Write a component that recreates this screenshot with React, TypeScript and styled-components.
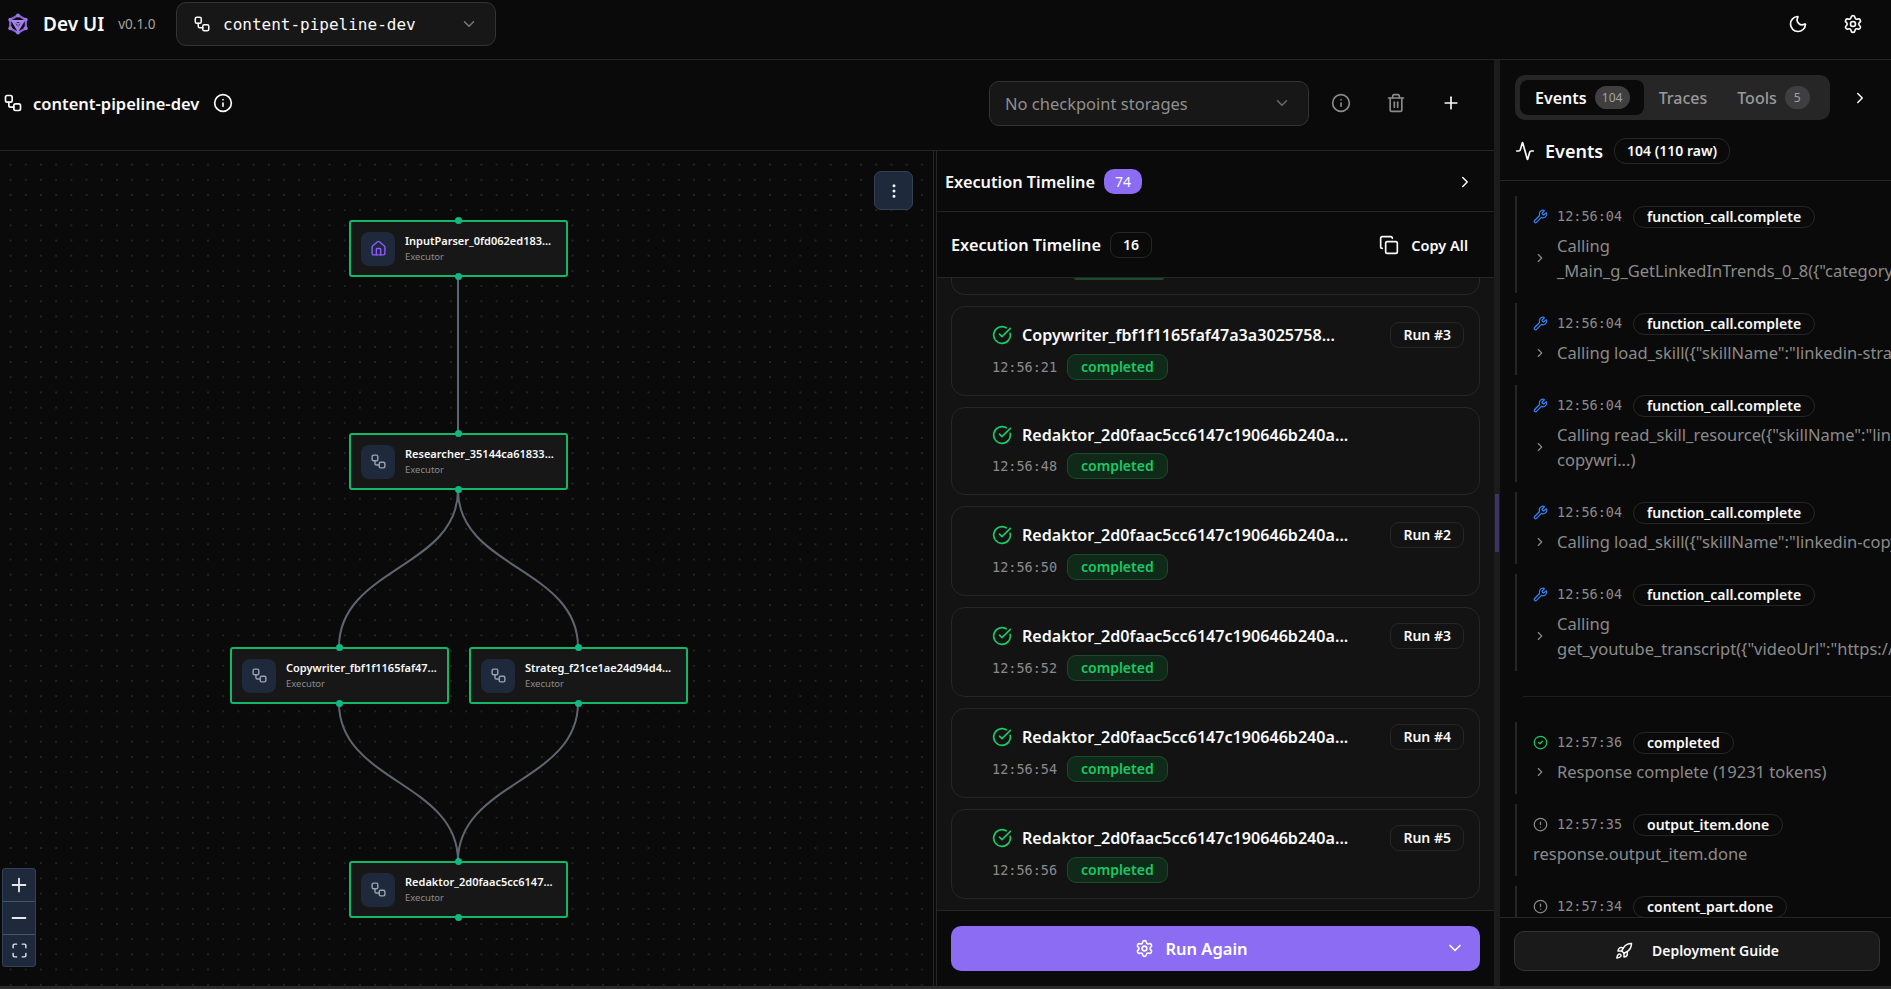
import { FC, ReactNode } from "react";
import styled, { createGlobalStyle } from "styled-components";
import {
  Activity,
  ChevronDown,
  ChevronRight,
  CircleAlert,
  CircleCheck,
  CircleCheckBig,
  Copy,
  EllipsisVertical,
  House,
  Info,
  Maximize,
  Minus,
  Moon,
  Plus,
  Rocket,
  Settings,
  Trash2,
  Workflow,
  Wrench,
} from "lucide-react";

const SANS = `"Noto Sans", "Open Sans", sans-serif`;
const MONO = `"DejaVu Sans Mono", "Liberation Mono", monospace`;

const GlobalStyle = createGlobalStyle`
  html, body {
    margin: 0;
    height: 100%;
    background: #0a0a0a;
    color: #fafafa;
    font-family: ${SANS};
    overflow: hidden;
  }
  * { box-sizing: border-box; }
`;

type FlowNode = { id: string; label: string; x: number; y: number; home?: boolean };

const NODES: FlowNode[] = [
  { id: "a", label: "InputParser_0fd062ed183...", x: 349, y: 69, home: true },
  { id: "b", label: "Researcher_35144ca61833...", x: 349, y: 282 },
  { id: "c", label: "Copywriter_fbf1f1165faf47...", x: 230, y: 496 },
  { id: "d", label: "Strateg_f21ce1ae24d94d4...", x: 469, y: 496 },
  { id: "e", label: "Redaktor_2d0faac5cc6147...", x: 349, y: 710 },
];

const EDGES = [
  "M458 126 L458 282",
  "M458 339 C458 417 339 417 339 496",
  "M458 339 C458 417 578 417 578 496",
  "M339 552 C339 631 458 631 458 710",
  "M578 552 C578 631 458 631 458 710",
];

const RUNS = [
  { title: "Copywriter_fbf1f1165faf47a3a3025758...", time: "12:56:21", run: "Run #3" },
  { title: "Redaktor_2d0faac5cc6147c190646b240a...", time: "12:56:48" },
  { title: "Redaktor_2d0faac5cc6147c190646b240a...", time: "12:56:50", run: "Run #2" },
  { title: "Redaktor_2d0faac5cc6147c190646b240a...", time: "12:56:52", run: "Run #3" },
  { title: "Redaktor_2d0faac5cc6147c190646b240a...", time: "12:56:54", run: "Run #4" },
  { title: "Redaktor_2d0faac5cc6147c190646b240a...", time: "12:56:56", run: "Run #5" },
];

type EventItem = {
  kind: "tool" | "ok" | "info";
  time: string;
  name: string;
  lines: string[];
  chevron?: boolean;
};

const TOOL_EVENTS: EventItem[] = [
  { kind: "tool", time: "12:56:04", name: "function_call.complete", chevron: true, lines: ["Calling", '_Main_g_GetLinkedInTrends_0_8({"category":"tech"})'] },
  { kind: "tool", time: "12:56:04", name: "function_call.complete", chevron: true, lines: ['Calling load_skill({"skillName":"linkedin-strategy"})'] },
  { kind: "tool", time: "12:56:04", name: "function_call.complete", chevron: true, lines: ['Calling read_skill_resource({"skillName":"linkedin-', "copywri...)"] },
  { kind: "tool", time: "12:56:04", name: "function_call.complete", chevron: true, lines: ['Calling load_skill({"skillName":"linkedin-copywriting"})'] },
  { kind: "tool", time: "12:56:04", name: "function_call.complete", chevron: true, lines: ["Calling", 'get_youtube_transcript({"videoUrl":"https://www.youtube'] },
];

const LATE_EVENTS: EventItem[] = [
  { kind: "ok", time: "12:57:36", name: "completed", chevron: true, lines: ["Response complete (19231 tokens)"] },
  { kind: "info", time: "12:57:35", name: "output_item.done", lines: ["response.output_item.done"] },
  { kind: "info", time: "12:57:34", name: "content_part.done", lines: ["response.content_part.done"] },
];

const Logo: FC = () => (
  <svg width="22" height="22" viewBox="0 0 24 24" fill="none">
    <path d="M12 2.5 20.5 7.3V16.7L12 21.5 3.5 16.7V7.3Z" stroke="#8a63d2" strokeWidth="2.4" />
    <path d="M4 7.5 12 21 20 7.5Z" fill="#a684ea" />
    <path d="M8.3 9.7H15.7L12 16.2Z" fill="#3a2a63" />
    <path d="M12 12.2V21M8.3 9.7 12 12.2 15.7 9.7" stroke="#a684ea" strokeWidth="1.4" />
    <circle cx="12" cy="2.7" r="2.2" fill="#9a78e2" />
    <circle cx="12" cy="21.3" r="2.2" fill="#9a78e2" />
    <circle cx="3.6" cy="7.4" r="2.2" fill="#9a78e2" />
    <circle cx="20.4" cy="7.4" r="2.2" fill="#9a78e2" />
    <circle cx="3.6" cy="16.6" r="2.2" fill="#9a78e2" />
    <circle cx="20.4" cy="16.6" r="2.2" fill="#9a78e2" />
  </svg>
);

const EventRow: FC<{ item: EventItem }> = ({ item }) => {
  let icon: ReactNode = <CircleAlert size={15} color="#8b8b8b" />;
  if (item.kind === "tool") icon = <Wrench size={15} color="#3b82f6" />;
  if (item.kind === "ok") icon = <CircleCheck size={15} color="#18c964" />;
  return (
    <EventBox>
      <EventHead>
        <EventIcon>{icon}</EventIcon>
        <EventTime>{item.time}</EventTime>
        <EventTag>{item.name}</EventTag>
      </EventHead>
      <EventBody>
        {item.chevron && (
          <EventChevron>
            <ChevronRight size={14} color="#8a8a8a" />
          </EventChevron>
        )}
        <div>
          {item.lines.map((line) => (
            <EventLine key={line}>{line}</EventLine>
          ))}
        </div>
      </EventBody>
    </EventBox>
  );
};

export default function App() {
  return (
    <Page>
      <GlobalStyle />
      <TopBar>
        <Brand>
          <Logo />
          <BrandName>Dev UI</BrandName>
          <Version>v0.1.0</Version>
        </Brand>
        <WorkflowSelect>
          <Workflow size={18} color="#fafafa" />
          <WorkflowName>content-pipeline-dev</WorkflowName>
          <ChevronDown size={18} color="#7a7a7a" />
        </WorkflowSelect>
        <TopActions>
          <Moon size={20} />
          <Settings size={20} />
        </TopActions>
      </TopBar>

      <Content>
        <Main>
          <TitleBar>
            <Workflow size={20} color="#fafafa" />
            <PageTitle>content-pipeline-dev</PageTitle>
            <Info size={20} color="#fafafa" />
            <TitleActions>
              <CheckpointSelect>
                <span>No checkpoint storages</span>
                <ChevronDown size={18} color="#6b6b6b" />
              </CheckpointSelect>
              <IconSlot>
                <Info size={20} color="#8a8a8a" />
              </IconSlot>
              <IconSlot>
                <Trash2 size={20} color="#8a8a8a" />
              </IconSlot>
              <IconSlot>
                <Plus size={20} color="#fafafa" />
              </IconSlot>
            </TitleActions>
          </TitleBar>

          <Split>
            <Canvas>
              <EdgeLayer width="934" height="835">
                {EDGES.map((d) => (
                  <path key={d} d={d} fill="none" stroke="#5f6570" strokeWidth="2" />
                ))}
              </EdgeLayer>
              {NODES.map((node) => (
                <NodeCard key={node.id} $x={node.x} $y={node.y}>
                  <TopHandle />
                  <NodeIcon>
                    {node.home ? <House size={17} color="#8b5cf6" /> : <Workflow size={17} color="#9ca3af" />}
                  </NodeIcon>
                  <NodeText>
                    <NodeLabel>{node.label}</NodeLabel>
                    <NodeKind>Executor</NodeKind>
                  </NodeText>
                  <BottomHandle />
                </NodeCard>
              ))}
              <MenuButton>
                <EllipsisVertical size={18} color="#f5f5f5" />
              </MenuButton>
              <ZoomControls>
                <ZoomButton>
                  <Plus size={22} />
                </ZoomButton>
                <ZoomButton>
                  <Minus size={22} />
                </ZoomButton>
                <ZoomButton>
                  <Maximize size={17} />
                </ZoomButton>
              </ZoomControls>
            </Canvas>

            <Timeline>
              <TimelineBar>
                <BarTitle>Execution Timeline</BarTitle>
                <PurpleCount>74</PurpleCount>
                <BarEnd>
                  <ChevronRight size={18} />
                </BarEnd>
              </TimelineBar>
              <TimelineHead>
                <BarTitle>Execution Timeline</BarTitle>
                <OutlineCount>16</OutlineCount>
                <CopyAll>
                  <Copy size={20} />
                  Copy All
                </CopyAll>
              </TimelineHead>
              <RunList>
                <RunStack>
                  <ClippedCard>
                    <StatusStub />
                  </ClippedCard>
                  {RUNS.map((item) => (
                    <RunCard key={item.time}>
                      <RunTop>
                        <CircleCheckBig size={20} color="#18c964" />
                        <RunTitle>{item.title}</RunTitle>
                        {item.run && <RunBadge>{item.run}</RunBadge>}
                      </RunTop>
                      <RunMeta>
                        <RunTime>{item.time}</RunTime>
                        <StatusBadge>completed</StatusBadge>
                      </RunMeta>
                    </RunCard>
                  ))}
                </RunStack>
              </RunList>
              <RunFooter>
                <RunButton>
                  <Settings size={19} />
                  Run Again
                  <RunCaret>
                    <ChevronDown size={20} />
                  </RunCaret>
                </RunButton>
              </RunFooter>
            </Timeline>
          </Split>
        </Main>

        <Handle>
          <HandleMark />
        </Handle>

        <Side>
          <TabsRow>
            <Tabs>
              <ActiveTab>
                Events <TabCount>104</TabCount>
              </ActiveTab>
              <Tab>Traces</Tab>
              <ToolsTab>
                Tools <TabCount $round>5</TabCount>
              </ToolsTab>
            </Tabs>
            <ChevronRight size={18} color="#fafafa" />
          </TabsRow>
          <EventsHead>
            <Activity size={20} />
            <EventsTitle>Events</EventsTitle>
            <EventsCount>104 (110 raw)</EventsCount>
          </EventsHead>
          <EventList>
            {TOOL_EVENTS.map((item, i) => (
              <EventRow key={i} item={item} />
            ))}
            <EventGap />
            {LATE_EVENTS.map((item) => (
              <EventRow key={item.time} item={item} />
            ))}
          </EventList>
          <SideFooter>
            <GuideButton>
              <Rocket size={18} />
              Deployment Guide
            </GuideButton>
          </SideFooter>
        </Side>
      </Content>
      <BottomEdge />
    </Page>
  );
}

const Page = styled.div`
  display: flex;
  flex-direction: column;
  height: 100vh;
  overflow: hidden;
`;

const TopBar = styled.header`
  display: flex;
  align-items: center;
  height: 60px;
  flex: none;
  padding: 0 28px 11px 7px;
  border-bottom: 1px solid #262626;
`;

const Brand = styled.div`
  display: flex;
  align-items: center;
  width: 169px;
`;

const BrandName = styled.span`
  margin-left: 14px;
  font-size: 19px;
  font-weight: 600;
`;

const Version = styled.span`
  margin-left: 14px;
  font-size: 13.5px;
  color: #a3a3a3;
`;

const WorkflowSelect = styled.div`
  display: flex;
  align-items: center;
  width: 320px;
  height: 44px;
  padding: 0 17px 0 16px;
  background: #171717;
  border: 1px solid #333;
  border-radius: 10px;
`;

const WorkflowName = styled.span`
  flex: 1;
  margin-left: 12px;
  font-family: ${MONO};
  font-size: 16px;
`;

const TopActions = styled.div`
  display: flex;
  align-items: center;
  gap: 35px;
  margin-left: auto;
  color: #fafafa;
`;

const Content = styled.div`
  display: flex;
  flex: 1;
  min-height: 0;
`;

const Main = styled.main`
  display: flex;
  flex-direction: column;
  width: 1494px;
  flex: none;
`;

const TitleBar = styled.div`
  display: flex;
  align-items: center;
  height: 91px;
  flex: none;
  padding: 0 0 4px 3px;
  border-bottom: 1px solid #262626;
`;

const PageTitle = styled.h1`
  margin: 0 14px 0 10px;
  font-size: 16.5px;
  font-weight: 600;
`;

const TitleActions = styled.div`
  display: flex;
  align-items: center;
  margin-left: auto;
  padding-right: 16px;
`;

const CheckpointSelect = styled.div`
  display: flex;
  align-items: center;
  justify-content: space-between;
  width: 320px;
  height: 45px;
  margin-right: 4px;
  padding: 0 17px 0 15px;
  background: #171717;
  border: 1px solid #333;
  border-radius: 10px;
  font-size: 16.5px;
  color: #8f8f8f;
`;

const IconSlot = styled.div`
  display: flex;
  align-items: center;
  justify-content: center;
  width: 55px;
  height: 40px;
`;

const Split = styled.div`
  display: flex;
  flex: 1;
  min-height: 0;
`;

const Canvas = styled.section`
  position: relative;
  width: 934px;
  flex: none;
  overflow: hidden;
  border-right: 1px solid #262626;
  background-color: #0a0a0a;
  background-image: radial-gradient(circle, #2a2a2a 0.6px, transparent 1px);
  background-size: 15.2px 15.2px;
  background-position: 3px 6px;
`;

const EdgeLayer = styled.svg`
  position: absolute;
  left: 0;
  top: 0;
`;

const NodeCard = styled.div<{ $x: number; $y: number }>`
  position: absolute;
  left: ${(p) => p.$x}px;
  top: ${(p) => p.$y}px;
  display: flex;
  align-items: center;
  gap: 10px;
  width: 219px;
  height: 57px;
  padding: 0 10px;
  background: #171717;
  border: 2px solid #12b76a;
  border-radius: 3px;
`;

const TopHandle = styled.i`
  position: absolute;
  left: 50%;
  top: -5px;
  width: 7px;
  height: 7px;
  margin-left: -3.5px;
  border-radius: 50%;
  background: #10b981;
`;

const BottomHandle = styled(TopHandle)`
  top: auto;
  bottom: -5px;
`;

const NodeIcon = styled.div`
  display: flex;
  align-items: center;
  justify-content: center;
  width: 34px;
  height: 34px;
  flex: none;
  background: #1e293b;
  border-radius: 8px;
`;

const NodeText = styled.div`
  display: flex;
  flex-direction: column;
  gap: 3px;
  min-width: 0;
  margin-top: -2px;
`;

const NodeLabel = styled.div`
  font-size: 11px;
  font-weight: 600;
  white-space: nowrap;
  line-height: 15px;
`;

const NodeKind = styled.div`
  font-size: 9.5px;
  color: #8c8c8c;
  line-height: 12px;
`;

const MenuButton = styled.div`
  position: absolute;
  right: 20px;
  top: 20px;
  display: flex;
  align-items: center;
  justify-content: center;
  width: 39px;
  height: 39px;
  background: #1e293b;
  border: 1px solid #334155;
  border-radius: 7px;
`;

const ZoomControls = styled.div`
  position: absolute;
  left: 2px;
  bottom: 19px;
  display: flex;
  flex-direction: column;
  width: 34px;
  background: #1e293b;
  border: 1px solid #334155;
  border-radius: 3px;
`;

const ZoomButton = styled.div`
  display: flex;
  align-items: center;
  justify-content: center;
  height: 32.5px;
  color: #e5e7eb;
  & + & {
    border-top: 1px solid #475569;
  }
`;

const Timeline = styled.section`
  display: flex;
  flex-direction: column;
  flex: 1;
  min-width: 0;
  margin-left: 2px;
  border-left: 1px solid #262626;
`;

const TimelineBar = styled.div`
  display: flex;
  align-items: center;
  gap: 9px;
  height: 61px;
  flex: none;
  padding: 1px 20px 0 8px;
  border-bottom: 1px solid #262626;
`;

const TimelineHead = styled(TimelineBar)`
  height: 66px;
  padding: 1px 26px 0 14px;
`;

const BarTitle = styled.span`
  font-size: 16.3px;
  font-weight: 600;
`;

const PurpleCount = styled.span`
  padding: 2px 11px;
  border-radius: 10px;
  background: #8b6cf2;
  font-size: 14px;
  line-height: 21px;
`;

const OutlineCount = styled.span`
  padding: 1px 12px;
  border: 1px solid #262626;
  border-radius: 9px;
  font-size: 14px;
  font-weight: 600;
  line-height: 22px;
`;

const BarEnd = styled.span`
  display: flex;
  margin-left: auto;
`;

const CopyAll = styled.span`
  display: flex;
  align-items: center;
  gap: 12px;
  margin-left: auto;
  font-size: 14.5px;
  font-weight: 600;
`;

const RunList = styled.div`
  flex: 1;
  min-height: 0;
  overflow: hidden;
  background: #131313;
  padding: 0 14px 0 14px;
  border-bottom: 1px solid #262626;
`;

const RunStack = styled.div`
  display: flex;
  flex-direction: column;
  gap: 11px;
`;

const RunCard = styled.article`
  display: flex;
  flex-direction: column;
  flex: none;
  padding: 15px 15px 15px 40px;
  border: 1px solid #262626;
  border-radius: 14px;
`;

const ClippedCard = styled.div`
  flex: none;
  height: 17px;
  overflow: hidden;
  padding-left: 122px;
  border: 1px solid #262626;
  border-top: 0;
  border-radius: 0 0 14px 14px;
`;

const StatusStub = styled.div`
  width: 90px;
  height: 2px;
  background: #1a4a2c;
  border-radius: 0 0 4px 4px;
`;

const RunTop = styled.div`
  display: flex;
  align-items: center;
  gap: 10px;
  min-height: 24px;
`;

const RunTitle = styled.span`
  flex: 1;
  font-size: 16.1px;
  font-weight: 600;
  white-space: nowrap;
`;

const RunBadge = styled.span`
  padding: 0 12px;
  border: 1px solid #262626;
  border-radius: 9px;
  font-size: 14px;
  font-weight: 600;
  line-height: 24px;
`;

const RunMeta = styled.div`
  display: flex;
  align-items: center;
  gap: 10px;
  margin-top: 6px;
`;

const RunTime = styled.span`
  font-family: ${MONO};
  font-size: 13.5px;
  color: #8a8a8a;
`;

const StatusBadge = styled.span`
  padding: 0 13px;
  border: 1px solid #1a4a2c;
  border-radius: 9px;
  background: #0f2a19;
  color: #18c964;
  font-size: 14px;
  font-weight: 600;
  line-height: 24px;
`;

const RunFooter = styled.div`
  display: flex;
  align-items: center;
  height: 75px;
  flex: none;
  padding: 0 14px 0 14px;
`;

const RunButton = styled.button`
  position: relative;
  display: flex;
  align-items: center;
  justify-content: center;
  gap: 11px;
  width: 100%;
  height: 45px;
  padding: 0 48px 0 0;
  border: 0;
  border-radius: 10px;
  background: #8b6cf2;
  color: #fff;
  font-family: ${SANS};
  font-size: 16.5px;
  font-weight: 600;
`;

const RunCaret = styled.span`
  position: absolute;
  right: 15px;
  top: 12px;
  display: flex;
`;

const Handle = styled.div`
  position: relative;
  width: 6px;
  flex: none;
  background: #1c1c1c;
`;

const HandleMark = styled.div`
  position: absolute;
  left: 1px;
  top: 434px;
  width: 4px;
  height: 58px;
  background: #3a3468;
`;

const Side = styled.aside`
  display: flex;
  flex-direction: column;
  flex: 1;
  min-width: 0;
`;

const TabsRow = styled.div`
  display: flex;
  align-items: center;
  gap: 21px;
  height: 60px;
  flex: none;
  padding: 15px 0 0 15px;
`;

const Tabs = styled.div`
  display: flex;
  align-items: center;
  gap: 15px;
  width: 315px;
  height: 45px;
  padding: 5px;
  background: #262626;
  border-radius: 10px;
`;

const Tab = styled.div`
  display: flex;
  align-items: center;
  gap: 8px;
  font-size: 16px;
  font-weight: 500;
  color: #9a9a9a;
`;

const ToolsTab = styled(Tab)`
  margin-left: 15px;
`;

const ActiveTab = styled(Tab)`
  height: 35px;
  padding: 0 14px 0 15px;
  background: #0a0a0a;
  border-radius: 8px;
  color: #fafafa;
  font-weight: 600;
`;

const TabCount = styled.span<{ $round?: boolean }>`
  display: flex;
  align-items: center;
  justify-content: center;
  width: ${(p) => (p.$round ? 25 : 35)}px;
  height: 23px;
  border-radius: 12px;
  background: #3f3f3f;
  color: #a3a3a3;
  font-size: 12px;
  font-weight: 400;
`;

const EventsHead = styled.div`
  display: flex;
  align-items: center;
  height: 61px;
  flex: none;
  padding: 1px 0 0 15px;
  border-bottom: 1px solid #262626;
`;

const EventsTitle = styled.span`
  margin: 0 11px 0 10px;
  font-size: 18px;
  font-weight: 600;
`;

const EventsCount = styled.span`
  padding: 0 12px;
  border: 1px solid #262626;
  border-radius: 12px;
  font-size: 14px;
  font-weight: 600;
  line-height: 24px;
`;

const EventList = styled.div`
  flex: 1;
  min-height: 0;
  overflow: hidden;
  display: flex;
  flex-direction: column;
  gap: 10px;
  padding: 15px 0 0 15px;
`;

const EventBox = styled.div`
  flex: none;
  padding: 9px 0 10px 16px;
  border-left: 2px solid #262626;
`;

const EventHead = styled.div`
  display: flex;
  align-items: center;
  height: 22px;
`;

const EventIcon = styled.span`
  display: flex;
  width: 24px;
`;

const EventTime = styled.span`
  width: 76px;
  font-family: ${MONO};
  font-size: 13.5px;
  color: #8a8a8a;
`;

const EventTag = styled.span`
  margin-top: 2px;
  padding: 0 13px;
  border: 1px solid #262626;
  border-radius: 11px;
  font-size: 14px;
  font-weight: 600;
  line-height: 20px;
  white-space: nowrap;
`;

const EventBody = styled.div`
  display: flex;
  align-items: center;
  margin-top: 6px;
  font-size: 16.5px;
  color: #8a8a8a;
`;

const EventChevron = styled.span`
  display: flex;
  width: 24px;
  flex: none;
`;

const EventLine = styled.div`
  line-height: 25px;
  white-space: nowrap;
`;

const EventGap = styled.div`
  flex: none;
  height: 0;
  margin: 15px 0 15px 8px;
  border-top: 1px solid #1f1f1f;
`;

const SideFooter = styled.div`
  display: flex;
  align-items: center;
  height: 69px;
  flex: none;
  padding: 0 11px 3px 14px;
  border-top: 1px solid #262626;
  background: #0a0a0a;
`;

const GuideButton = styled.button`
  display: flex;
  align-items: center;
  justify-content: center;
  gap: 19px;
  width: 100%;
  height: 40px;
  background: #1a1a1a;
  border: 1px solid #333;
  border-radius: 10px;
  color: #fafafa;
  font-family: ${SANS};
  font-size: 14px;
  font-weight: 600;
`;

const BottomEdge = styled.div`
  height: 3px;
  flex: none;
  background: #2b2b2b;
`;
